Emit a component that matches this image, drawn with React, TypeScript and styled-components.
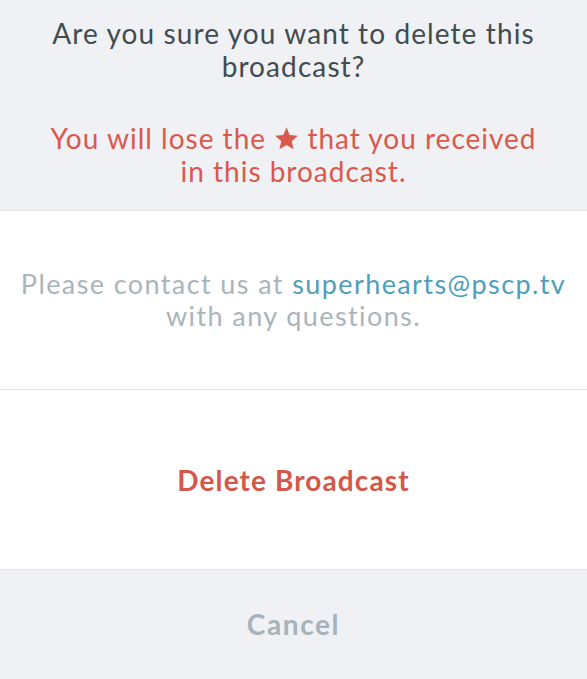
import React from 'react';
import styled, { createGlobalStyle } from 'styled-components';

const GlobalStyle = createGlobalStyle`
  html, body {
    margin: 0;
    padding: 0;
    background: #eff1f4;
  }
  body {
    font-family: Lato, "Open Sans", Arial, sans-serif;
    -webkit-font-smoothing: antialiased;
  }
`;

const Sheet = styled.div`
  width: 587px;
  height: 679px;
  display: flex;
  flex-direction: column;
  background: #eff1f4;
`;

const Header = styled.div`
  height: 211px;
  box-sizing: border-box;
  padding: 17px 10px 0;
  display: flex;
  flex-direction: column;
  align-items: center;
  gap: 39px;
  border-bottom: 1px solid #e1e3e6;
`;

const Title = styled.p<{ $tone?: 'dark' | 'warn' }>`
  margin: 0;
  font-size: 28px;
  line-height: 33px;
  font-weight: 400;
  letter-spacing: ${(p) => (p.$tone === 'warn' ? '1px' : '1.1px')};
  text-align: center;
  color: ${(p) => (p.$tone === 'warn' ? '#d9594c' : '#414b50')};
`;

const Star = styled.svg`
  width: 25px;
  height: 25px;
  vertical-align: -2px;
`;

const Section = styled.div<{ $height: number; $bg?: string; $last?: boolean }>`
  height: ${(p) => p.$height}px;
  box-sizing: border-box;
  background: ${(p) => p.$bg || '#ffffff'};
  border-bottom: ${(p) => (p.$last ? 'none' : '1px solid #e1e3e6')};
  display: flex;
  align-items: center;
  justify-content: center;
  text-align: center;
`;

const Info = styled.p`
  margin: 0;
  font-size: 27px;
  line-height: 32px;
  letter-spacing: 1.4px;
  color: #a9b5bb;
`;

const Email = styled.span`
  color: #4f9ebc;
`;

const ActionButton = styled.button<{ $variant: 'danger' | 'muted' }>`
  border: none;
  background: none;
  padding: 0;
  font-family: Lato, "Open Sans", Arial, sans-serif;
  font-size: 28px;
  font-weight: 700;
  letter-spacing: ${(p) => (p.$variant === 'danger' ? '1.1px' : '1.6px')};
  color: ${(p) => (p.$variant === 'danger' ? '#d4574a' : '#a7b3b9')};
  cursor: pointer;
`;

export default function App() {
  return (
    <>
      <GlobalStyle />
      <Sheet>
        <Header>
          <Title>Are you sure you want to delete this broadcast?</Title>
          <Title $tone="warn">
            You will lose the{' '}
            <Star viewBox="0 0 24 24" aria-hidden>
              <path
                d="M12 1.5l3.1 7.2 7.8.7-5.9 5.2 1.8 7.7L12 18.2l-6.8 4.1L7 14.6 1.1 9.4l7.8-.7z"
                fill="#d9594c"
              />
            </Star>{' '}
            that you received
            <br />
            in this broadcast.
          </Title>
        </Header>
        <Section $height={179}>
          <Info>
            Please contact us at <Email>superhearts@pscp.tv</Email>
            <br />
            with any questions.
          </Info>
        </Section>
        <Section $height={180}>
          <ActionButton $variant="danger">Delete Broadcast</ActionButton>
        </Section>
        <Section $height={108} $bg="#eff1f4" $last>
          <ActionButton $variant="muted">Cancel</ActionButton>
        </Section>
      </Sheet>
    </>
  );
}
